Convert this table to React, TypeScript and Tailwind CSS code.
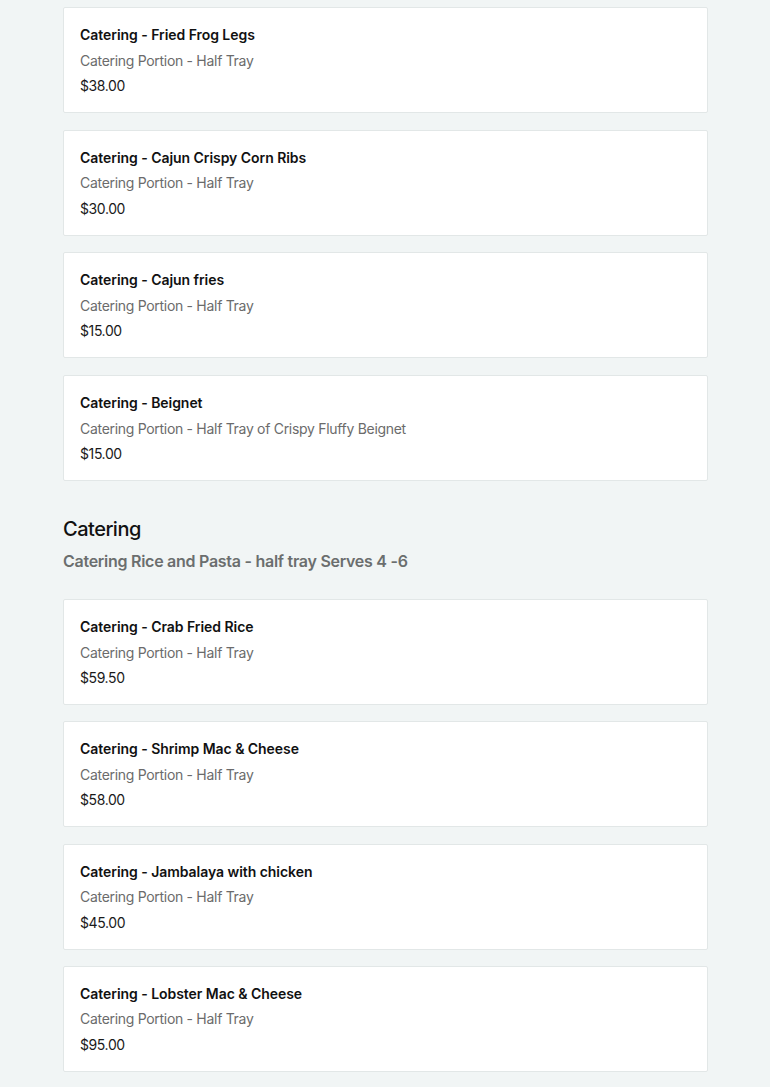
import React from "react";

interface Item {
  name: string;
  desc: string;
  price: string;
}

const sides: Item[] = [
  { name: "Catering - Fried Frog Legs", desc: "Catering Portion - Half Tray", price: "$38.00" },
  { name: "Catering - Cajun Crispy Corn Ribs", desc: "Catering Portion - Half Tray", price: "$30.00" },
  { name: "Catering - Cajun fries", desc: "Catering Portion - Half Tray", price: "$15.00" },
  { name: "Catering - Beignet", desc: "Catering Portion - Half Tray of Crispy Fluffy Beignet", price: "$15.00" },
];

const ricePasta: Item[] = [
  { name: "Catering - Crab Fried Rice", desc: "Catering Portion - Half Tray", price: "$59.50" },
  { name: "Catering - Shrimp Mac & Cheese", desc: "Catering Portion - Half Tray", price: "$58.00" },
  { name: "Catering - Jambalaya with chicken", desc: "Catering Portion - Half Tray", price: "$45.00" },
  { name: "Catering - Lobster Mac & Cheese", desc: "Catering Portion - Half Tray", price: "$95.00" },
];

const MenuCard = ({ item }: { item: Item }) => (
  <div className="h-[106px] bg-white border border-[#e2e7e7] rounded-[2px] px-4 pt-[14px] text-[14px] leading-[25.5px]">
    <p className="font-semibold text-[#111] tracking-[-0.05px]">{item.name}</p>
    <p className="text-[#6b6b6b] tracking-[-0.3px]">{item.desc}</p>
    <p className="text-[#1a1a1a] tracking-[-0.4px]">{item.price}</p>
  </div>
);

const App = () => {
  return (
    <div
      className="min-h-[1087px] bg-[#f1f5f5] pt-[7px] pb-10"
      style={{ fontFamily: "Inter, 'Noto Sans', sans-serif" }}
    >
      <div className="ml-[63px] w-[645px]">
        {/* first group */}
        <div className="flex flex-col gap-[16.7px]">
          {sides.map((item) => (
            <MenuCard key={item.name} item={item} />
          ))}
        </div>

        {/* section header */}
        <h2 className="mt-[34px] text-[20px] leading-[28px] font-medium text-[#111] tracking-[-0.5px]">Catering</h2>
        <p className="mt-[6px] text-[16px] leading-[24px] font-semibold text-[#6b6e6e] tracking-[-0.27px]">
          Catering Rice and Pasta - half tray Serves 4 -6
        </p>

        <div className="mt-[26px] flex flex-col gap-[16.3px]">
          {ricePasta.map((item) => (
            <MenuCard key={item.name} item={item} />
          ))}
        </div>
      </div>
    </div>
  );
};

export default App;
